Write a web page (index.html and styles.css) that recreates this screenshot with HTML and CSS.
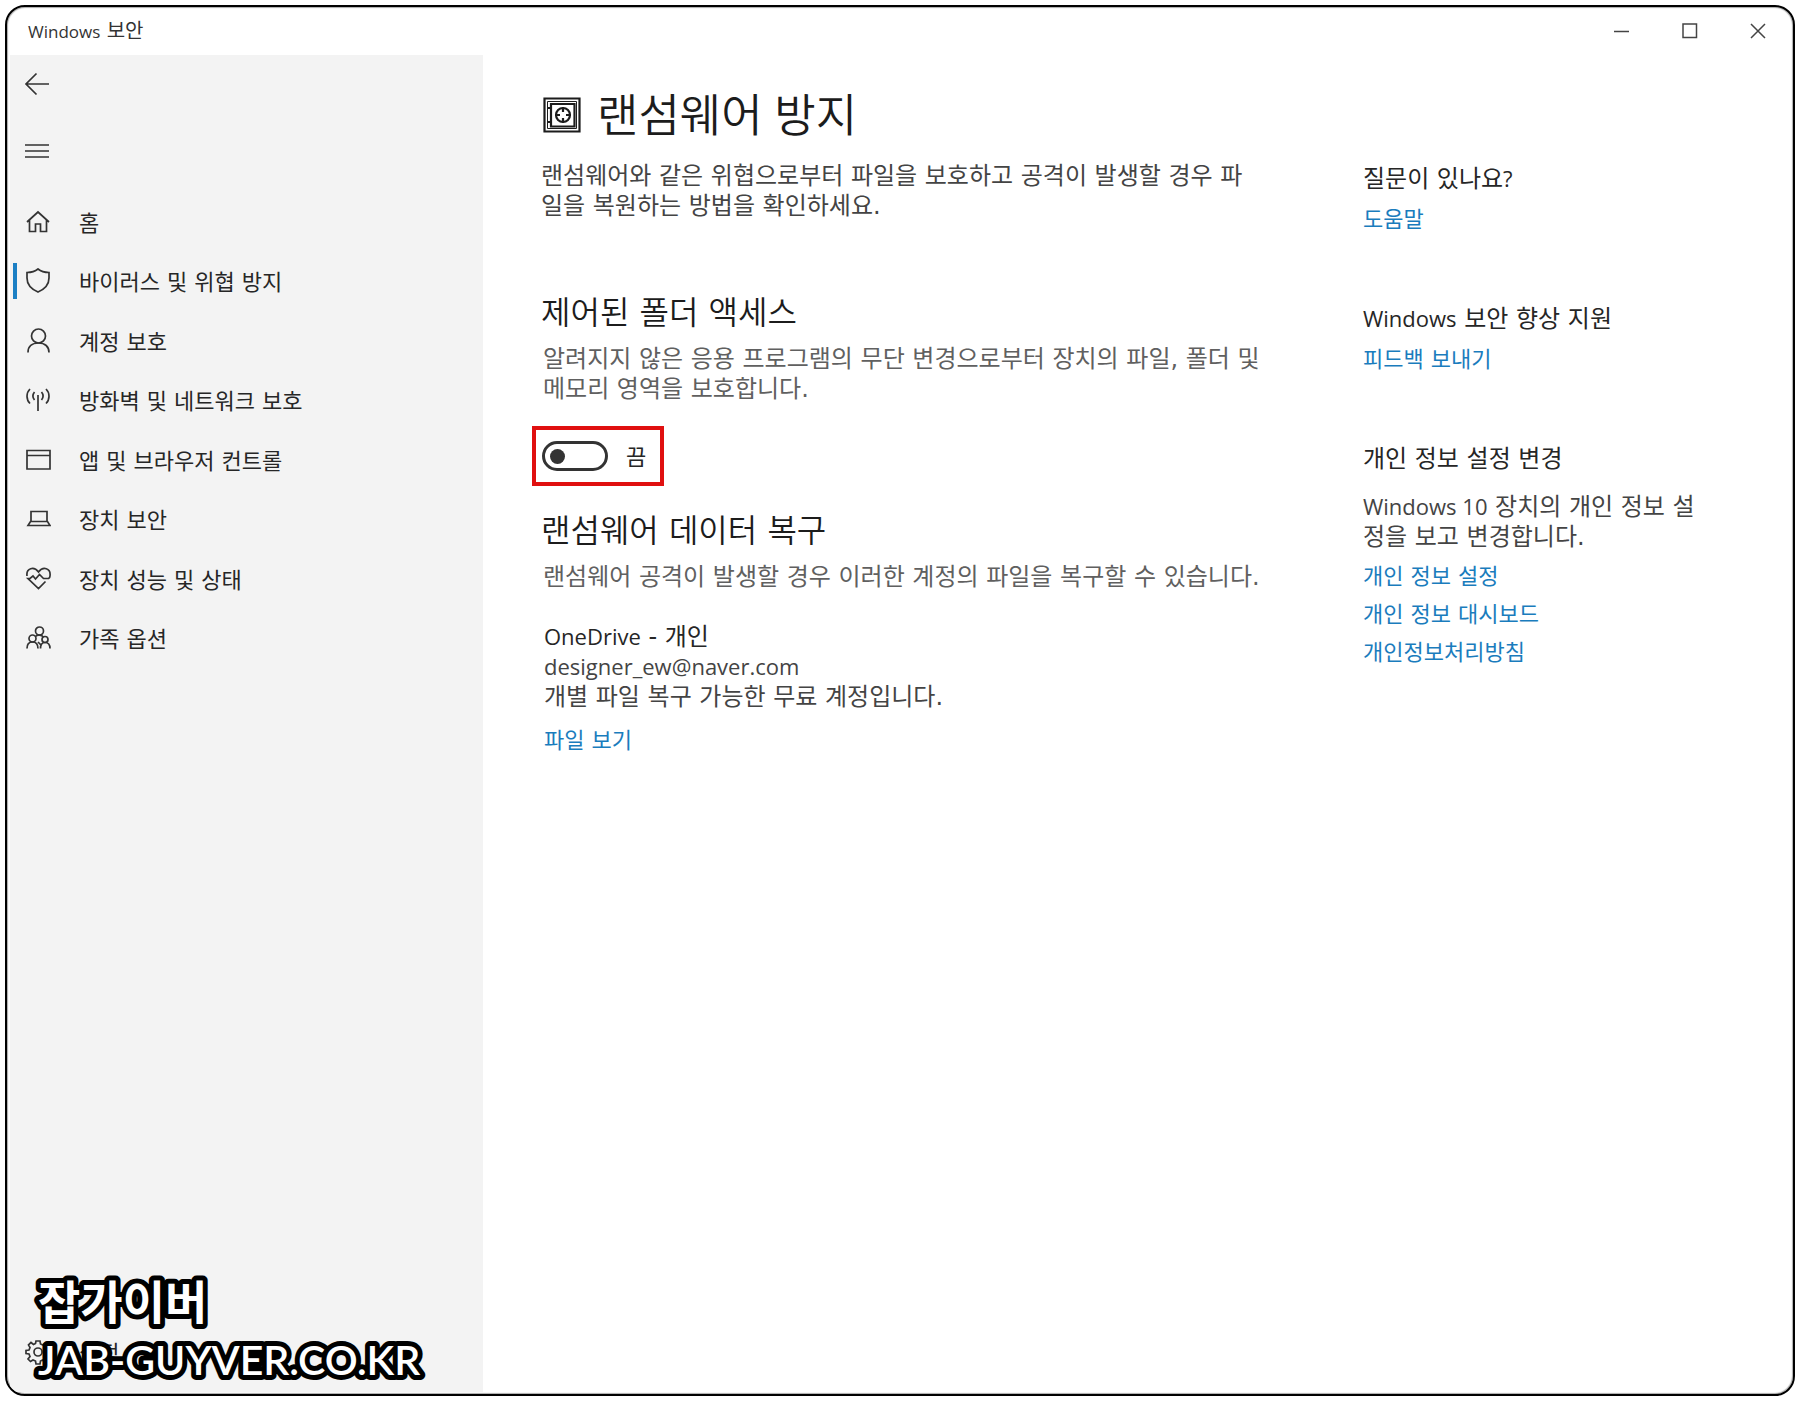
FILE: index.html
```html
<!DOCTYPE html>
<html lang="ko">
<head>
<meta charset="utf-8">
<meta name="viewport" content="width=device-width, initial-scale=1">
<title>Windows 보안</title>
<link rel="stylesheet" href="styles.css">
</head>
<body>
<div class="window">
  <header class="titlebar">
    <span class="titlebar-name"><span class="latin">Windows</span> 보안</span>
    <div class="caption-buttons">
      <button type="button" class="caption-button" aria-label="최소화"><svg class="caption-icon" viewBox="0 0 16 16"><path d="M0 8.500H15"/></svg></button>
      <button type="button" class="caption-button" aria-label="최대화"><svg class="caption-icon" viewBox="0 0 16 16"><path d="M1 1H14.500V14.500H1Z"/></svg></button>
      <button type="button" class="caption-button" aria-label="닫기"><svg class="caption-icon" viewBox="0 0 16 16"><path d="M1 1L15 15M15 1L1 15"/></svg></button>
    </div>
  </header>

  <div class="layout">
    <aside class="sidebar">
      <button type="button" class="side-button" aria-label="뒤로"><svg class="icon" viewBox="0 0 26 26"><path d="M25 13H2M12.500 2.500L2 13L12.500 23.500"/></svg></button>
      <button type="button" class="side-button" aria-label="메뉴"><svg class="icon" viewBox="0 0 26 26"><path d="M1 7H25M1 13H25M1 19H25"/></svg></button>
      <nav>
        <ul class="nav-list">
          <li><a class="nav-item" href="#home"><svg class="icon" viewBox="0 0 26 26"><path d="M2 13L13 3L24 13M4.500 11V22.500H10.500V15H15.500V22.500H21.500V11"/></svg>홈</a></li>
          <li><a class="nav-item nav-current" href="#virus" aria-current="page"><svg class="icon" viewBox="0 0 26 26"><path d="M13 1C10 3.500 6 4.500 2 4.500V10C2 16 6 21 13 24C20 21 24 16 24 10V4.500C20 4.500 16 3.500 13 1Z"/></svg>바이러스 및 위협 방지</a></li>
          <li><a class="nav-item" href="#account"><svg class="icon" viewBox="0 0 26 26"><circle cx="13.500" cy="8" r="7"/><path d="M3 24.500C3 18.500 7 15 13.500 15S24 18.500 24 24.500"/></svg>계정 보호</a></li>
          <li><a class="nav-item" href="#firewall"><svg class="icon" viewBox="0 0 26 26"><path d="M13 8V24M9.500 5C7.500 7.500 7.500 10.500 9.500 13M16.500 5C18.500 7.500 18.500 10.500 16.500 13M5 2C1 6 1 12.500 5 16.500M21 2C25 6 25 12.500 21 16.500"/></svg>방화벽 및 네트워크 보호</a></li>
          <li><a class="nav-item" href="#app"><svg class="icon" viewBox="0 0 26 26"><path d="M2 3.500H25V22H2ZM2 8.500H25"/></svg>앱 및 브라우저 컨트롤</a></li>
          <li><a class="nav-item" href="#device"><svg class="icon" viewBox="0 0 26 26"><path d="M6 15.500V5.500H22V15.500M5.500 15.500H22.500L25 19.500H3ZM3 19.500H25"/></svg>장치 보안</a></li>
          <li><a class="nav-item" href="#health"><svg class="icon" viewBox="0 0 26 26"><path d="M2 10C1 2 9 0 13.500 6C18 0 26 2 25 10C25 11 24.500 12 23.500 12.500H18.500L14.500 8.500L10.500 13L8 10L5 12.500H3L13.500 22.500L20.500 15.500"/></svg>장치 성능 및 상태</a></li>
          <li><a class="nav-item" href="#family"><svg class="icon" viewBox="0 0 26 26"><circle cx="14.500" cy="6" r="4"/><circle cx="7.500" cy="13.500" r="3.500"/><circle cx="20" cy="14.500" r="3"/><path d="M2 23.500C2 19 4 17 7.500 17S13 19 13 23.500M15.500 23.500C15.500 19.500 17 17.500 20 17.500S25 19.500 25 23.500M10.500 11.500C12 9.500 17 9.500 18.500 12.500M13 17L16 20"/></svg>가족 옵션</a></li>
        </ul>
      </nav>
      <a class="nav-item nav-settings" href="#settings"><svg class="icon" viewBox="0 0 26 26"><circle cx="13" cy="13" r="4"/><path d="M11 2H15L15.500 5L18 6L20.500 4L23 7L21 9.500L22 12H25V15L22 16L21 18L22.500 20.500L20 23L17.500 21L15.500 22L15 25H11L10.500 22L8 21L5.500 22.500L3 20L5 17.500L4 15L1 14.500V11.500L4 11L5 8.500L3.500 6L6 3.500L8.500 5.500L10.500 4.500Z"/></svg>설정</a>
    </aside>

    <main class="content">
      <div class="primary">
        <h1 class="page-title"><svg class="title-icon" viewBox="0 0 38 36"><path class="safe-frame" d="M1.500 1.500H36.500V34.500H1.500Z"/><path class="safe-frame" d="M8 7H31.500V29.500H8Z"/><path d="M4.500 4.500H33.500V31.500H4.500Z"/><circle class="safe-frame" cx="20" cy="18" r="7"/><path class="safe-frame" d="M20 10V15M20 21V26M12 18H17M23 18H28M5 11H9M5 25H9"/></svg>랜섬웨어 방지</h1>
        <p class="text page-intro">랜섬웨어와 같은 위협으로부터 파일을 보호하고 공격이 발생할 경우 파<br>일을 복원하는 방법을 확인하세요.</p>

        <section class="folder-access">
          <h2 class="heading">제어된 폴더 액세스</h2>
          <p class="text muted">알려지지 않은 응용 프로그램의 무단 변경으로부터 장치의 파일, 폴더 및<br>메모리 영역을 보호합니다.</p>
          <label class="toggle"><input class="switch" type="checkbox" role="switch"> 끔</label>
        </section>

        <section class="recovery">
          <h2 class="heading">랜섬웨어 데이터 복구</h2>
          <p class="text muted">랜섬웨어 공격이 발생할 경우 이러한 계정의 파일을 복구할 수 있습니다.</p>
          <div class="account">
            <h3 class="subheading"><span class="latin">OneDrive</span> - 개인</h3>
            <p class="text"><span class="latin">designer_ew@naver.com</span></p>
            <p class="text">개별 파일 복구 가능한 무료 계정입니다.</p>
            <a class="link files-link" href="#files">파일 보기</a>
          </div>
        </section>
      </div>

      <aside class="related">
        <section>
          <h3 class="subheading">질문이 있나요<span class="latin">?</span></h3>
          <a class="link" href="#help">도움말</a>
        </section>
        <section>
          <h3 class="subheading"><span class="latin">Windows</span> 보안 향상 지원</h3>
          <a class="link" href="#feedback">피드백 보내기</a>
        </section>
        <section>
          <h3 class="subheading">개인 정보 설정 변경</h3>
          <p class="text privacy-text"><span class="latin">Windows 10</span> 장치의 개인 정보 설<br>정을 보고 변경합니다.</p>
          <a class="link" href="#privacy">개인 정보 설정</a>
          <a class="link" href="#dashboard">개인 정보 대시보드</a>
          <a class="link" href="#policy">개인정보처리방침</a>
        </section>
      </aside>
    </main>
  </div>

  <svg class="watermark" viewBox="0 0 420 130">
    <text class="watermark-name" x="8" y="55">잡가이버</text>
    <text class="watermark-site" x="8" y="111">JAB-GUYVER.CO.KR</text>
  </svg>
</div>
</body>
</html>
```
FILE: styles.css
```css
* { box-sizing: border-box; }

body {
  margin: 0;
  background: #fff;
  color: #262626;
  font-family: "DejaVu Sans", "Noto Sans CJK KR", sans-serif;
  font-size: 22px;
  line-height: 30px;
}

h1, h2, h3, p, ul { margin: 0; padding: 0; font-weight: 400; }

button {
  padding: 0;
  border: 0;
  background: none;
  color: inherit;
}

a { text-decoration: none; }

svg {
  display: block;
  flex: none;
  fill: none;
  stroke: currentColor;
}

.latin {
  font-family: "Open Sans", sans-serif;
  font-size: 22px;
  line-height: 1;
}

.window {
  position: relative;
  display: flex;
  flex-direction: column;
  min-height: calc(100vh - 10px);
  margin: 5px;
  border: 2px solid #000;
  border-radius: 20px;
  box-shadow: inset 0 0 1px 1px #aaa;
  overflow: hidden;
}

/* Title bar */
.titlebar {
  display: flex;
  justify-content: space-between;
  align-items: center;
  height: 48px;
  padding: 0 1px 0 21px;
}

.titlebar-name { font-size: 20px; color: #333; }
.titlebar-name .latin { font-size: 17px; }
.caption-buttons { display: flex; }

.caption-button {
  display: grid;
  place-items: center;
  width: 68px;
  height: 48px;
}

.caption-icon { width: 16px; height: 16px; stroke: #444; stroke-width: 1.5; }

.layout { display: flex; flex: 1; }

/* Sidebar */
.sidebar {
  display: flex;
  flex-direction: column;
  width: 473px;
  margin: 0 0 2px 3px;
  padding-bottom: 9px;
  background: #f3f3f3;
}

.icon { width: 26px; height: 26px; stroke: #333; stroke-width: 1.7; }

.side-button {
  display: flex;
  align-items: center;
  width: 58px;
  height: 58px;
  margin-bottom: 9px;
  padding-left: 14px;
}

.nav-list {
  display: grid;
  grid-auto-rows: 59px 60px;
  margin-top: 6px;
  list-style: none;
}

.nav-item {
  position: relative;
  display: flex;
  align-items: center;
  gap: 28px;
  height: 58px;
  padding-left: 15px;
  color: #262626;
}

.nav-item .icon { margin-bottom: 4px; }

.nav-current::before {
  content: "";
  position: absolute;
  top: 9px;
  left: 3px;
  width: 4px;
  height: 36px;
  background: #1b7fc4;
}

.nav-settings { margin-top: auto; }

/* Page content */
.content {
  display: grid;
  grid-template-columns: minmax(0, 730px) minmax(0, 340px);
  gap: 92px;
  flex: 1;
  align-content: start;
  padding: 30px 0 0 58px;
}

.page-title {
  display: flex;
  align-items: center;
  gap: 16px;
  padding-left: 2px;
  font-family: "Open Sans", "Noto Sans CJK KR", sans-serif;
  font-size: 45px;
  font-weight: 350;
  line-height: 60px;
  color: #1c1c1c;
}

.title-icon { width: 38px; height: 36px; stroke-width: 1; }
.safe-frame { stroke-width: 2.2; }

.text { font-size: 24px; color: #444; }
.muted { padding-left: 2px; color: #606060; }
.heading {
  margin-bottom: 11px;
  font-size: 32px;
  font-weight: 350;
  line-height: 40px;
  color: #1c1c1c;
}
.subheading { font-size: 24px; line-height: 30px; color: #262626; }
.link { display: block; width: fit-content; color: #1a7cbd; }

.page-intro { margin-top: 16px; }
.folder-access { margin-top: 72px; }

.toggle {
  display: flex;
  align-items: center;
  gap: 18px;
  width: 132px;
  height: 60px;
  margin: 22px 0 0 -9px;
  padding-left: 6px;
  border: 4px solid #e01010;
  font-family: "Open Sans", "Noto Sans CJK KR", sans-serif;
}

.switch {
  appearance: none;
  display: flex;
  align-items: center;
  width: 66px;
  height: 30px;
  margin: 0;
  padding-left: 5px;
  border: 3px solid #333;
  border-radius: 15px;
}

.switch::before {
  content: "";
  width: 15px;
  height: 15px;
  border-radius: 50%;
  background: #333;
}

.switch:checked { justify-content: end; padding: 0 5px 0 0; }

.recovery { margin-top: 25px; }
.account { margin-top: 30px; padding-left: 3px; }
.files-link { margin-top: 14px; }

.related {
  display: flex;
  flex-direction: column;
  gap: 69px;
  padding-top: 79px;
}

.related .subheading { margin-bottom: 11px; }
.related .link + .link { margin-top: 8px; }
.privacy-text { margin: 18px 0 10px; }

/* Site mark laid over the window's lower left corner */
.watermark {
  position: absolute;
  left: 23px;
  bottom: 0;
  width: 420px;
  height: 130px;
  font-family: Lato, "Noto Sans CJK KR", sans-serif;
  font-weight: 600;
  fill: #fff;
  stroke: #000;
  stroke-width: 10px;
  stroke-linejoin: round;
  paint-order: stroke fill;
}

.watermark-name { font-size: 46px; }
.watermark-site { font-size: 41px; }
```
